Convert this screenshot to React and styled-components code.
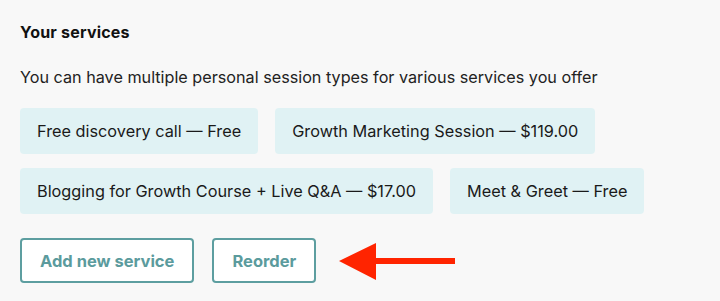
import React from 'react';
import styled, { createGlobalStyle } from 'styled-components';

const GlobalStyle = createGlobalStyle`
  html, body {
    margin: 0;
    padding: 0;
    background: #f8f8f8;
  }
  body {
    font-family: Inter, "Noto Sans", sans-serif;
    color: #1c1c1c;
  }
`;

const services = [
  [
    { id: 1, name: 'Free discovery call', price: 'Free' },
    { id: 2, name: 'Growth Marketing Session', price: '$119.00' },
  ],
  [
    { id: 3, name: 'Blogging for Growth Course + Live Q&A', price: '$17.00' },
    { id: 4, name: 'Meet & Greet', price: 'Free' },
  ],
];

function App() {
  return (
    <>
      <GlobalStyle />
      <Section>
        <Title>Your services</Title>
        <Description>
          You can have multiple personal session types for various services you offer
        </Description>
        <ChipList>
          {services.map((row, i) => (
            <ChipRow key={i}>
              {row.map((s) => (
                <Chip key={s.id}>
                  {s.name} — {s.price}
                </Chip>
              ))}
            </ChipRow>
          ))}
        </ChipList>
        <Actions>
          <OutlineButton>Add new service</OutlineButton>
          <OutlineButton>Reorder</OutlineButton>
          <Arrow width="118" height="40" viewBox="0 0 118 40">
            <polygon points="0,20 37,2 37,17 116,17 116,23 37,23 37,39" fill="#ff2400" />
          </Arrow>
        </Actions>
      </Section>
    </>
  );
}

const Section = styled.section`
  width: 720px;
  height: 301px;
  box-sizing: border-box;
  padding: 22px 20px 0 20px;
  overflow: hidden;
`;

const Title = styled.h3`
  margin: 0;
  font-size: 16px;
  line-height: 20px;
  font-weight: 700;
  letter-spacing: 0.2px;
  color: #111;
`;

const Description = styled.p`
  margin: 24px 0 0;
  font-size: 16.2px;
  line-height: 22px;
  color: #222;
`;

const ChipList = styled.div`
  display: flex;
  flex-direction: column;
  gap: 14px;
  margin-top: 20px;
`;

const ChipRow = styled.div`
  display: flex;
  gap: 17px;
`;

const Chip = styled.div`
  display: flex;
  align-items: center;
  height: 46px;
  padding: 0 17px;
  background: #e0f2f4;
  border-radius: 4px;
  font-size: 16.3px;
  white-space: nowrap;
  color: #1a1a1a;
`;

const Actions = styled.div`
  display: flex;
  align-items: center;
  gap: 18px;
  margin-top: 24px;
`;

const OutlineButton = styled.button`
  height: 45px;
  padding: 0 18px;
  background: #fff;
  border: 2px solid #5d9ea0;
  border-radius: 4px;
  color: #5b9b9d;
  font-family: inherit;
  font-size: 16.5px;
  font-weight: 700;
  cursor: pointer;
`;

const Arrow = styled.svg`
  margin-left: 5px;
  flex-shrink: 0;
`;

export default App;
